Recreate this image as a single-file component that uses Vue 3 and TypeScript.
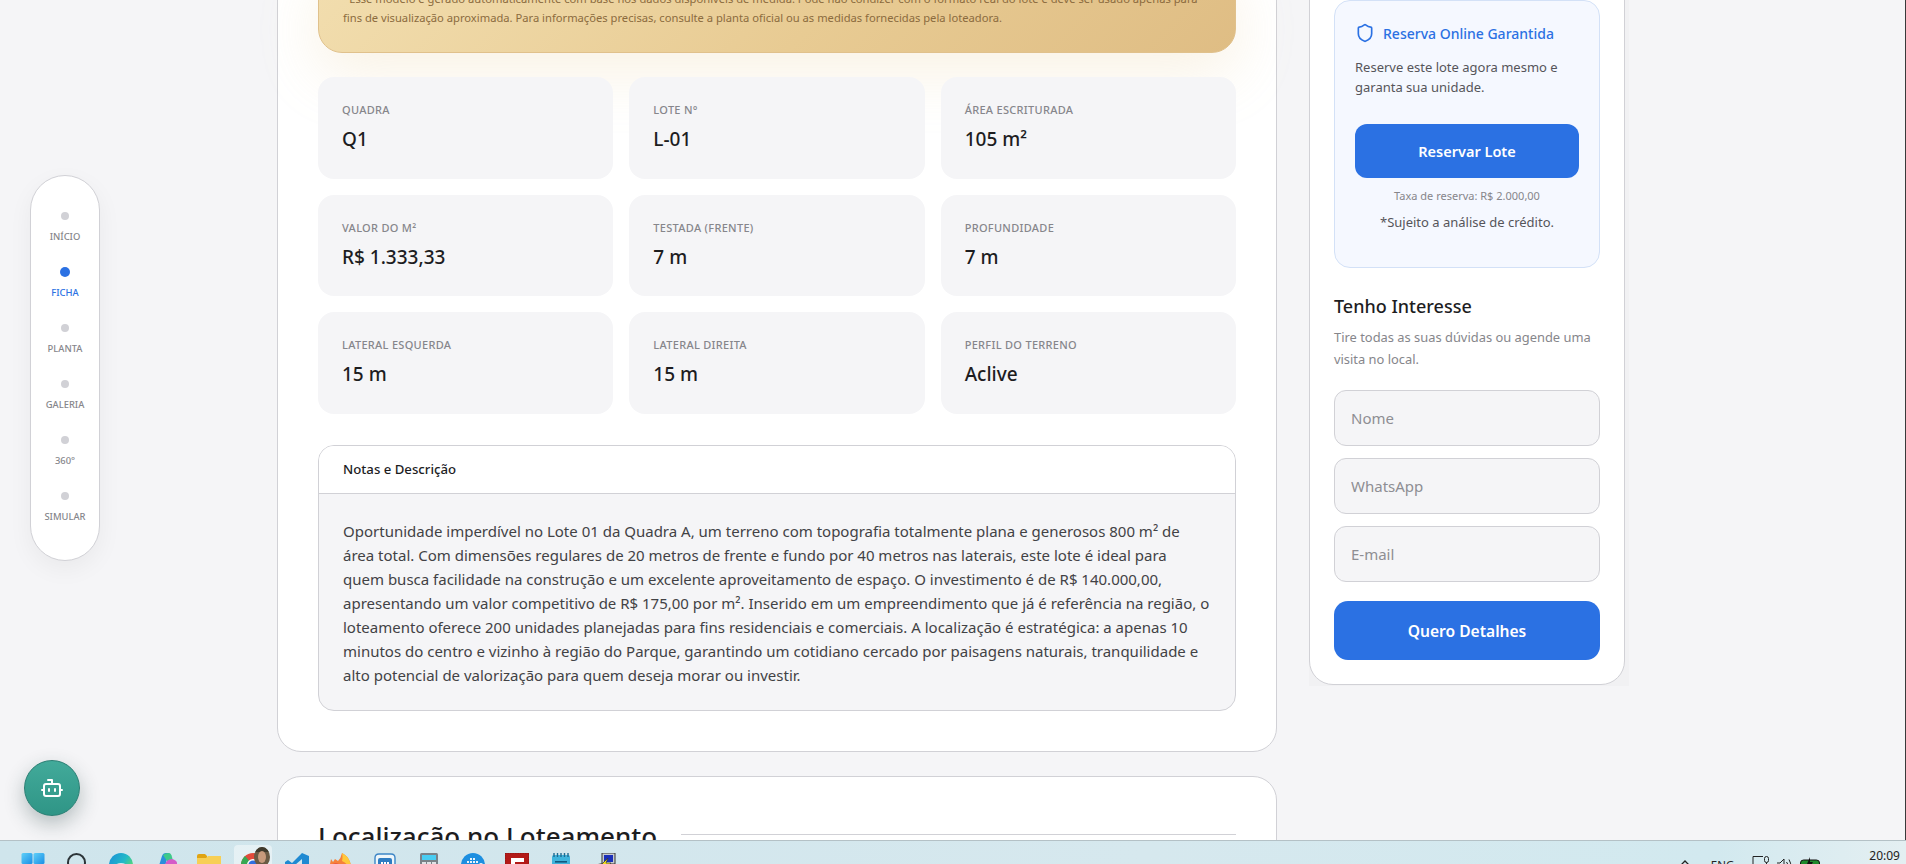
<script setup lang="ts">
const navItems = [
  { label: 'Início', active: false },
  { label: 'Ficha', active: true },
  { label: 'Planta', active: false },
  { label: 'Galeria', active: false },
  { label: '360°', active: false },
  { label: 'Simular', active: false },
]
const specs = [
  { label: 'Quadra', value: 'Q1' },
  { label: 'Lote N°', value: 'L-01' },
  { label: 'Área Escriturada', value: '105 m²' },
  { label: 'Valor do m²', value: 'R$ 1.333,33' },
  { label: 'Testada (Frente)', value: '7 m' },
  { label: 'Profundidade', value: '7 m' },
  { label: 'Lateral Esquerda', value: '15 m' },
  { label: 'Lateral Direita', value: '15 m' },
  { label: 'Perfil do Terreno', value: 'Aclive' },
]
const fields = ['Nome', 'WhatsApp', 'E-mail']
</script>

<template>
  <div class="screen">
    <div class="viewport">
      <div class="columns">
        <main class="main">
          <section class="card first">
            <div class="banner">
              <p>*Esse modelo é gerado automaticamente com base nos dados disponíveis de medida. Pode não condizer com o formato real do lote e deve ser usado apenas para fins de visualização aproximada. Para informações precisas, consulte a planta oficial ou as medidas fornecidas pela loteadora.</p>
            </div>
            <div class="specs">
              <div v-for="s in specs" :key="s.label" class="spec">
                <div class="spec-label">{{ s.label }}</div>
                <div class="spec-value">{{ s.value }}</div>
              </div>
            </div>
            <div class="notes">
              <div class="notes-head">Notas e Descrição</div>
              <p class="notes-body">Oportunidade imperdível no Lote 01 da Quadra A, um terreno com topografia totalmente plana e generosos 800 m² de área total. Com dimensões regulares de 20 metros de frente e fundo por 40 metros nas laterais, este lote é ideal para quem busca facilidade na construção e um excelente aproveitamento de espaço. O investimento é de R$ 140.000,00, apresentando um valor competitivo de R$ 175,00 por m². Inserido em um empreendimento que já é referência na região, o loteamento oferece 200 unidades planejadas para fins residenciais e comerciais. A localização é estratégica: a apenas 10 minutos do centro e vizinho à região do Parque, garantindo um cotidiano cercado por paisagens naturais, tranquilidade e alto potencial de valorização para quem deseja morar ou investir.</p>
            </div>
          </section>
          <section class="card second">
            <div class="section-title">
              <h2>Localização no Loteamento</h2>
              <span class="rule"></span>
            </div>
          </section>
        </main>

        <aside class="aside">
          <div class="side-card">
            <div class="reserve">
              <div class="reserve-title">
                <svg viewBox="0 0 24 24" width="20" height="20" fill="none" stroke="currentColor" stroke-width="2" stroke-linecap="round" stroke-linejoin="round"><path d="M20 13c0 5-3.5 7.5-7.66 8.95a1 1 0 0 1-.67-.01C7.5 20.5 4 18 4 13V6a1 1 0 0 1 1-1c2 0 4.5-1.2 6.24-2.72a1.17 1.17 0 0 1 1.52 0C14.51 3.81 17 5 19 5a1 1 0 0 1 1 1z"/></svg>
                <span>Reserva Online Garantida</span>
              </div>
              <p class="reserve-text">Reserve este lote agora mesmo e garanta sua unidade.</p>
              <button class="btn btn-reserve" type="button">Reservar Lote</button>
              <div class="fee">Taxa de reserva: R$ 2.000,00</div>
              <div class="credit">*Sujeito a análise de crédito.</div>
            </div>
            <h3 class="interest">Tenho Interesse</h3>
            <p class="interest-text">Tire todas as suas dúvidas ou agende uma visita no local.</p>
            <form class="form" @submit.prevent>
              <input v-for="f in fields" :key="f" class="input" type="text" :placeholder="f" />
              <button class="btn btn-details" type="button">Quero Detalhes</button>
            </form>
          </div>
        </aside>
      </div>

      <nav class="rail">
        <div v-for="n in navItems" :key="n.label" class="rail-item" :class="{ on: n.active }">
          <span class="rail-dot"></span>
          <span class="rail-label">{{ n.label }}</span>
        </div>
      </nav>

      <button class="bot" type="button" aria-label="Assistente">
        <svg viewBox="0 0 24 24" width="24" height="24" fill="none" stroke="#fff" stroke-width="2" stroke-linecap="round" stroke-linejoin="round"><path d="M12 8V4H8"/><rect x="4" y="8" width="16" height="12" rx="2"/><path d="M2 14h2"/><path d="M20 14h2"/><path d="M15 13v2"/><path d="M9 13v2"/></svg>
      </button>
    </div>

    <footer class="taskbar">
      <div class="apps">
        <!-- Windows -->
        <div class="app"><svg viewBox="0 0 24 24" width="24" height="24"><defs><linearGradient id="w" x1="0" y1="0" x2="1" y2="1"><stop offset="0" stop-color="#5fd0f8"/><stop offset="1" stop-color="#1b8fe6"/></linearGradient></defs><rect x="0.5" y="0" width="11" height="11" rx="1.5" fill="url(#w)"/><rect x="12.5" y="0" width="11" height="11" rx="1.5" fill="url(#w)"/><rect x="0.5" y="12" width="11" height="11" fill="url(#w)"/><rect x="12.5" y="12" width="11" height="11" fill="url(#w)"/></svg></div>
        <!-- Search -->
        <div class="app"><svg viewBox="0 0 24 24" width="24" height="24" fill="none"><circle cx="11.5" cy="9.5" r="8.5" stroke="#2c3438" stroke-width="2"/></svg></div>
        <!-- Edge -->
        <div class="app"><svg viewBox="0 0 24 24" width="24" height="24" fill="none"><defs><linearGradient id="e" x1="0" y1="0" x2="1" y2="0.6"><stop offset="0" stop-color="#1a8fd8"/><stop offset=".6" stop-color="#22b9c8"/><stop offset="1" stop-color="#5fdc6a"/></linearGradient></defs><circle cx="12" cy="12" r="12" fill="url(#e)"/><ellipse cx="12" cy="13" rx="6" ry="3" fill="#d3e8ee"/><circle cx="13" cy="17" r="5" fill="#0f62b8"/></svg></div>
        <!-- Copilot -->
        <div class="app"><svg viewBox="0 0 24 24" width="24" height="24"><path d="M3 22 L9 3 Q10 0 13 0 L16 0 L9 22 Z" fill="#2a8fdc"/><path d="M10 2 Q12 0 16 0 Q18 0 19 4 L20 8 L14 8 Z" fill="#3fc98a"/><path d="M9 22 L13 9 L18 7 L21 10 L16 22 Z" fill="#7a5fe0"/><circle cx="18.5" cy="12" r="6" fill="#d45cc8"/></svg></div>
        <!-- Folder -->
        <div class="app"><svg viewBox="0 0 24 24" width="24" height="24"><path d="M0 3 Q0 1 2 1 H8 L10 3 V6 H0 Z" fill="#e0a412"/><path d="M0 5 H9 L11 3 H24 V24 H0 Z" fill="#f7cf55"/></svg></div>
        <!-- Chrome (active) -->
        <div class="app app-active"><svg viewBox="0 0 24 24" width="24" height="24"><circle cx="12" cy="12" r="12" fill="#e24a3b"/><path d="M0 12 A12 12 0 0 1 4 3 L12 12 L4 24 Z" fill="#37a853"/><circle cx="12" cy="12" r="6" fill="#fff"/><circle cx="12" cy="12" r="4.6" fill="#2f6fe0"/></svg><span class="avatar"><span class="hair"></span><span class="face"></span></span></div>
        <!-- VS Code -->
        <div class="app"><svg viewBox="0 0 24 24" width="24" height="24"><path d="M17 0 L24 3 V21 L17 24 L7 14 L3 17 L0 15 V9 L3 7 L7 10 Z" fill="#1f8ad2"/><path d="M17 6 L10 12 L17 18 Z" fill="#d3e8ee"/></svg></div>
        <!-- Firefox -->
        <div class="app"><svg viewBox="0 0 24 24" width="24" height="24"><path d="M13 0 Q19 3 21 9 Q23 14 21 24 H3 Q0 16 1 11 L2 6 L4 9 L6 6 L9 8 Q12 5 13 0 Z" fill="#f6813a"/><path d="M13 0 Q19 3 21 9 Q22 12 21 16 Q18 10 13 8 Q14 4 13 0 Z" fill="#ffc93c"/><path d="M2 12 Q6 9 10 11 Q6 13 6 18 Z" fill="#e8503c"/></svg></div>
        <!-- Sandbox -->
        <div class="app"><svg viewBox="0 0 24 24" width="24" height="24" fill="none"><path d="M2 5 Q2 1 6 1 H18 Q22 1 22 5 V24 H2 Z" fill="#eef6fa" stroke="#3d86c6" stroke-width="1.4"/><rect x="5" y="5" width="14" height="19" rx="2" fill="#2e7cc2"/><path d="M8 9h2v2H8zM11 9h2v2h-2zM14 9h2v2h-2zM8 12h2v2H8zM11 12h2v2h-2z" fill="#fff"/></svg></div>
        <!-- Calculator -->
        <div class="app"><svg viewBox="0 0 24 24" width="24" height="24"><rect x="3" y="0" width="18" height="24" rx="1.5" fill="#7a8288"/><rect x="5" y="2" width="14" height="5" fill="#49cdf2"/><rect x="5" y="9" width="4" height="6" fill="#dfe3e6"/><rect x="10" y="9" width="4" height="6" fill="#dfe3e6"/><rect x="15" y="9" width="4" height="6" fill="#dfe3e6"/></svg></div>
        <!-- Docker -->
        <div class="app"><svg viewBox="0 0 24 24" width="24" height="24"><circle cx="12" cy="12" r="12" fill="#1d8fe0"/><path d="M9 5h2v2H9zM12 5h2v2h-2zM6 8h2v2H6zM9 8h2v2H9zM12 8h2v2h-2zM15 8h2v2h-2z" fill="#e8f4fb"/><path d="M3 11 H18 Q20 9 22 11 Q20 17 12 18 Q5 18 3 11 Z" fill="#e8f4fb"/></svg></div>
        <!-- FileZilla -->
        <div class="app"><svg viewBox="0 0 24 24" width="24" height="24"><rect x="0" y="0" width="24" height="24" fill="#b31a18" stroke="#7c1412" stroke-width="1" stroke-dasharray="1.5 1"/><path d="M6 5 H19 V9 H10 V11 H17 L16 15 H10 V20 H6 Z" fill="#fff"/></svg></div>
        <!-- Notepad -->
        <div class="app"><svg viewBox="0 0 24 24" width="24" height="24"><rect x="3" y="2" width="18" height="22" rx="2" fill="#3fb4dc"/><path d="M5 0v4M8.5 0v4M12 0v4M15.5 0v4M19 0v4" stroke="#1f6a90" stroke-width="1.4"/><rect x="6" y="8" width="12" height="1.6" fill="#0f5a80"/><rect x="6" y="12" width="12" height="1.6" fill="#0f5a80"/></svg></div>
        <!-- PuTTY -->
        <div class="app"><svg viewBox="0 0 24 24" width="24" height="24"><rect x="9" y="0" width="13" height="11" fill="#c8ccd0" stroke="#333"/><rect x="11" y="2" width="9" height="7" fill="#1a2fb8"/><path d="M3 12 L11 10 V16 L3 20 Z" fill="#d8dcdf" stroke="#333" stroke-width=".8"/><path d="M15 5 L8 12 H12 L7 20 L18 10 H13 Z" fill="#f6e21a" stroke="#333" stroke-width=".7"/></svg></div>
      </div>
      <div class="tray">
        <svg class="chev" viewBox="0 0 12 8" width="12" height="8" fill="none" stroke="#222" stroke-width="1.3"><path d="M2 6 L6 2 L10 6"/></svg>
        <span class="lang">ENG</span>
        <svg class="tray-net" viewBox="0 0 18 14" width="18" height="14" fill="none" stroke="#222" stroke-width="1"><path d="M11 .5 H1 V13"/><rect x="12.5" y="0.5" width="4" height="6" rx="2"/><path d="M14.5 6.5 V13"/></svg>
        <svg class="tray-vol" viewBox="0 0 18 14" width="18" height="14" fill="none" stroke="#222" stroke-width="1"><path d="M1 6 H4 L8 2 V14"/><path d="M10.5 5 Q12 7 12 9"/><path d="M13 2.5 Q15 6 15 10"/></svg>
        <svg class="tray-bat" viewBox="0 0 20 14" width="20" height="14"><rect x="0.5" y="3" width="19" height="11" rx="3" fill="#1f8a2c" stroke="#111"/><path d="M10 0 L7 7 H10 L9 12 L13 5 H10 Z" fill="#111"/></svg>
        <span class="clock">20:09</span>
      </div>
    </footer>
  </div>
</template>

<style scoped>
.screen {
  width: 1906px;
  height: 864px;
  display: flex;
  flex-direction: column;
  overflow: hidden;
  font-family: "Noto Sans", "Open Sans", Arial, sans-serif;
  color: #1d1d1f;
  background: #f5f5f7;
}
.viewport {
  position: relative;
  flex: 0 0 840px;
  height: 840px;
  overflow: hidden;
  border-right: 1px solid #3a3a3a;
  box-sizing: border-box;
}
.columns {
  display: flex;
  align-items: flex-start;
  padding-left: 277px;
  gap: 32px;
}
.main {
  width: 1000px;
  flex: none;
  margin-top: -75px;
  display: flex;
  flex-direction: column;
  gap: 24px;
}
.card {
  background: #fff;
  border: 1px solid #d1d1d6;
  border-radius: 24px;
  padding: 40px;
  box-sizing: border-box;
}
.banner {
  background: linear-gradient(135deg, #f2deaf 0%, #e8cb93 55%, #dfbd84 100%);
  border-radius: 24px;
  border: 1px solid #e0c18c;
  padding: 22px 24px 25px;
  box-shadow: 0 20px 60px rgba(226, 196, 130, 0.22);
}
.banner p {
  margin: 0;
  font-size: 11.2px;
  line-height: 19px;
  color: #8b6b3e;
}
.specs {
  margin-top: 24px;
  display: grid;
  grid-template-columns: repeat(3, 1fr);
  gap: 16px;
  position: relative;
}
.spec {
  background: #f5f5f7;
  border-radius: 16px;
  padding: 25px 24px 0;
  height: 101.5px;
  box-sizing: border-box;
}
.spec-label {
  font-size: 11px;
  line-height: 16px;
  text-transform: uppercase;
  letter-spacing: 0.3px;
  color: #86868b;
  font-weight: 500;
}
.spec-value {
  margin-top: 7px;
  font-size: 19px;
  line-height: 28px;
  font-weight: 500;
}
.notes {
  margin-top: 31px;
  border: 1px solid #d1d1d6;
  border-radius: 16px;
  overflow: hidden;
  background: #f5f5f7;
}
.notes-head {
  height: 47px;
  line-height: 46px;
  padding-left: 24px;
  background: #fff;
  font-size: 13.2px;
  font-weight: 500;
  border-bottom: 1px solid #d1d1d6;
}
.notes-body {
  margin: 0;
  padding: 25px 24px 23px;
  font-size: 15px;
  line-height: 24px;
  color: #424245;
}
.section-title {
  display: flex;
  align-items: center;
  gap: 24px;
  height: 36px;
}
.section-title h2 {
  margin: 3px 0 0;
  font-size: 26px;
  font-weight: 500;
  line-height: 36px;
  white-space: nowrap;
}
.rule {
  flex: 1;
  height: 1px;
  background: #d1d1d6;
}
.aside {
  flex: none;
  width: 320px;
  margin-top: -25px;
  padding: 0 4px 1px 0;
  box-sizing: border-box;
  background: #f1f1f3;
}
.side-card {
  background: #fff;
  border: 1px solid #d1d1d6;
  border-radius: 24px;
  padding: 24px 24px 24px;
  width: 316px;
  box-sizing: border-box;
}
.reserve {
  background: #f5f8ff;
  border: 1px solid #d3e1f7;
  border-radius: 16px;
  padding: 20px 20px 36px;
}
.reserve-title {
  display: flex;
  align-items: center;
  gap: 8px;
  height: 24px;
  color: #2b71e3;
  font-size: 14px;
  font-weight: 500;
}
.reserve-text {
  margin: 12px 0 27px;
  font-size: 13px;
  line-height: 20px;
  color: #55555a;
}
.btn {
  display: block;
  width: 100%;
  border: 0;
  background: #2b71e3;
  color: #fff;
  font-family: inherit;
  font-weight: 600;
}
.btn-reserve {
  height: 54px;
  border-radius: 12px;
  font-size: 14.5px;
}
.fee {
  margin-top: 10px;
  text-align: center;
  font-size: 11px;
  line-height: 16px;
  color: #86868b;
}
.credit {
  margin-top: 9px;
  text-align: center;
  font-size: 13px;
  line-height: 18px;
  color: #55555a;
}
.interest {
  margin: 24px 0 0;
  font-size: 18px;
  font-weight: 500;
  line-height: 28px;
}
.interest-text {
  margin: 6px 0 0;
  font-size: 12.9px;
  line-height: 22px;
  color: #86868b;
}
.form {
  margin-top: 20px;
  display: flex;
  flex-direction: column;
  gap: 12px;
}
.input {
  height: 56px;
  box-sizing: border-box;
  width: 100%;
  border: 1px solid #d1d1d6;
  border-radius: 12px;
  background: #f5f5f7;
  padding: 0 16px;
  font-family: inherit;
  font-size: 15px;
  outline: none;
}
.input::placeholder {
  color: #8e8e93;
  opacity: 1;
}
.btn-details {
  height: 59px;
  margin-top: 7px;
  border-radius: 14px;
  font-size: 15.6px;
}
.rail {
  position: absolute;
  left: 30px;
  top: 175px;
  width: 70px;
  height: 386px;
  box-sizing: border-box;
  padding-top: 28px;
  background: #fff;
  border: 1px solid #d1d1d6;
  border-radius: 35px;
  box-shadow: 0 8px 24px rgba(0, 0, 0, 0.05);
  display: flex;
  flex-direction: column;
  align-items: center;
}
.rail-item {
  height: 56px;
  display: flex;
  flex-direction: column;
  align-items: center;
  color: #86868b;
}
.rail-dot {
  width: 8px;
  height: 8px;
  margin: 8px 0 10px;
  border-radius: 50%;
  background: #d1d1d6;
}
.rail-label {
  font-size: 9.4px;
  line-height: 14px;
  text-transform: uppercase;
  font-weight: 500;
}
.rail-item.on {
  color: #2b71e3;
}
.rail-item.on .rail-dot {
  width: 10px;
  height: 10px;
  margin: 7px 0 9px;
  background: #2b71e3;
}
.bot {
  position: absolute;
  left: 24px;
  top: 760px;
  width: 56px;
  height: 56px;
  padding: 0;
  border-radius: 50%;
  border: 1px solid #2a7d72;
  background: linear-gradient(180deg, #42aa9a 0%, #2f9586 100%);
  box-shadow: 0 8px 20px rgba(30, 60, 60, 0.3);
  display: flex;
  align-items: center;
  justify-content: center;
}
.taskbar {
  flex: 0 0 24px;
  height: 24px;
  box-sizing: border-box;
  border-top: 1px solid #b4c1c6;
  background: linear-gradient(90deg, #cfe5ec 0%, #d6e8ee 60%, #d2e9ef 90%, #e4eff2 100%);
  display: flex;
  justify-content: space-between;
  overflow: hidden;
}
.apps {
  display: flex;
  padding-left: 11px;
}
.app {
  position: relative;
  width: 44px;
  height: 44px;
  flex: none;
  display: flex;
  justify-content: center;
  padding-top: 12px;
  box-sizing: border-box;
}
.app-active::before {
  content: "";
  position: absolute;
  left: 3px;
  top: 4px;
  width: 38px;
  height: 40px;
  border-radius: 4px;
  background: rgba(255, 255, 255, 0.45);
}
.app svg {
  position: relative;
}
.avatar {
  position: absolute;
  left: 23px;
  top: 6px;
  width: 16px;
  height: 20px;
  border-radius: 50%;
  background: #6a5a44;
  overflow: hidden;
}
.face {
  position: absolute;
  left: 4px;
  top: 4px;
  width: 8px;
  height: 12px;
  border-radius: 50%;
  background: #c79a7c;
}
.hair {
  position: absolute;
  left: 0;
  top: 0;
  width: 16px;
  height: 5px;
  background: #3f3a2c;
}
.tray {
  display: flex;
  align-items: flex-start;
  padding-right: 6px;
}
.chev {
  margin: 18px 0 0;
}
.lang {
  margin: 17px 0 0 20px;
  font-size: 11.5px;
  line-height: 14px;
  color: #222;
}
.tray-net {
  margin: 15px 0 0 18px;
}
.tray-vol {
  margin: 16px 0 0 6px;
}
.tray-bat {
  margin: 16px 0 0 6px;
}
.clock {
  margin: 7px 0 0 49px;
  font-size: 12px;
  line-height: 16px;
  color: #222;
}
</style>

<style>
html,
body {
  margin: 0;
  overflow: hidden;
}
</style>
